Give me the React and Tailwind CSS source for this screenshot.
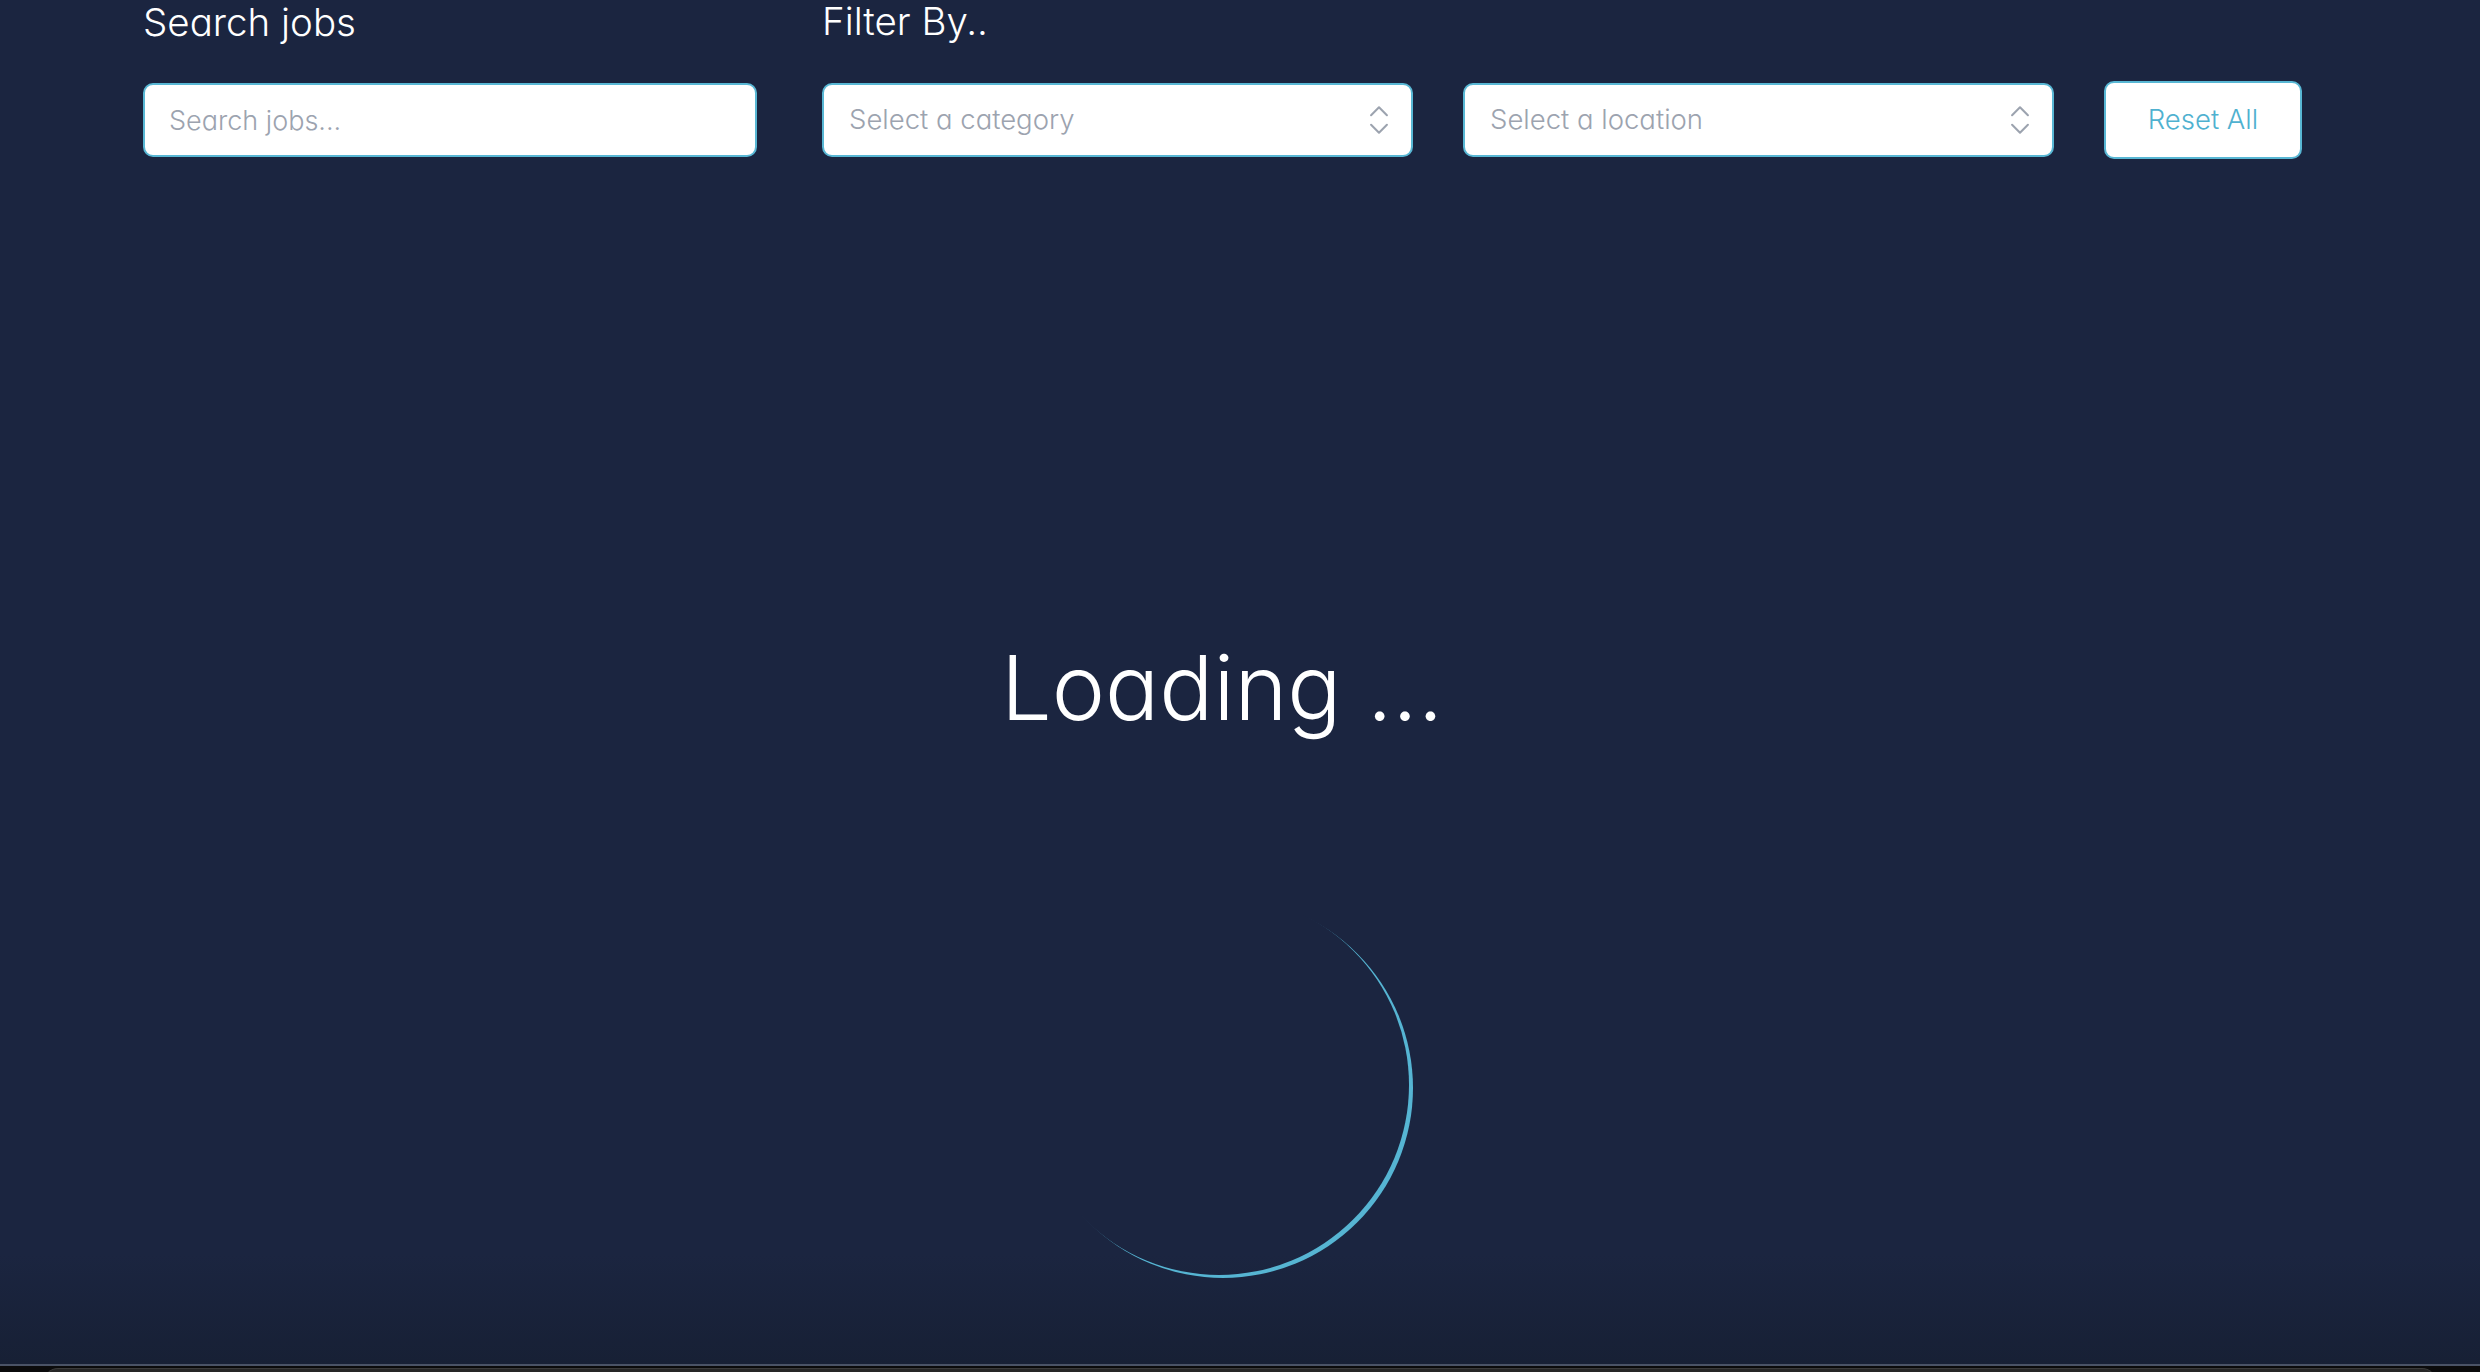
import React from "react";
import { ChevronsUpDown } from "lucide-react";

function Select({ placeholder }) {
  return (
    <div className="flex h-[74px] w-[591px] items-center justify-between rounded-[10px] border-2 border-[#58b7d4] bg-white pl-[25px] pr-[13px]">
      <span className="text-[27.5px] font-light text-[#9ca3af]">{placeholder}</span>
      <ChevronsUpDown size={38} strokeWidth={1.3} className="text-[#9ca3af]" />
    </div>
  );
}

export default function App() {
  return (
    <div className="w-full overflow-hidden font-['Inter','Noto_Sans',sans-serif] [font-feature-settings:'cv11']">
      <main className="h-[1364px] bg-[linear-gradient(to_bottom,#1b2540_92%,#172035)] pl-[143px] pr-[179px]">
        <div className="flex items-start">
          <div className="flex w-[614px] flex-col">
            <div className="-mt-[1px] text-[38.5px] font-light leading-[47px] text-white">Search jobs</div>
            <input
              className="mt-[37px] h-[74px] w-[614px] rounded-[10px] border-2 border-[#58b7d4] bg-white px-[24px] text-[27px] font-light outline-none placeholder:text-[#9ca3af]"
              placeholder="Search jobs..."
            />
          </div>
          <div className="ml-[65px] flex flex-col">
            <div className="-mt-[2px] text-[38.5px] font-light leading-[47px] text-white">Filter By..</div>
            <div className="mt-[36px] flex items-center gap-[50px]">
              <Select placeholder="Select a category" />
              <Select placeholder="Select a location" />
              <button className="h-[78px] w-[198px] rounded-[10px] border-2 border-[#58b7d4] bg-white text-[27.5px] font-light text-[#4fb1d0]">
                Reset All
              </button>
            </div>
          </div>
        </div>
        <div className="flex flex-col items-center">
          <div className="mt-[484px] text-[90px] font-light leading-none text-white">Loading ...</div>
          <div className="mt-[162px] h-[380px] w-[380px] -translate-x-[3px] rounded-full shadow-[4px_3px_0_0_#56b5d3]" />
        </div>
      </main>
      <footer className="border-t-2 border-[#4a5366] bg-[#0b0b0c] px-[44px] pt-[2px]">
        <div className="h-[60px] rounded-t-[14px] border-t border-[#3a3a3a] bg-[#262626]" />
      </footer>
    </div>
  );
}
